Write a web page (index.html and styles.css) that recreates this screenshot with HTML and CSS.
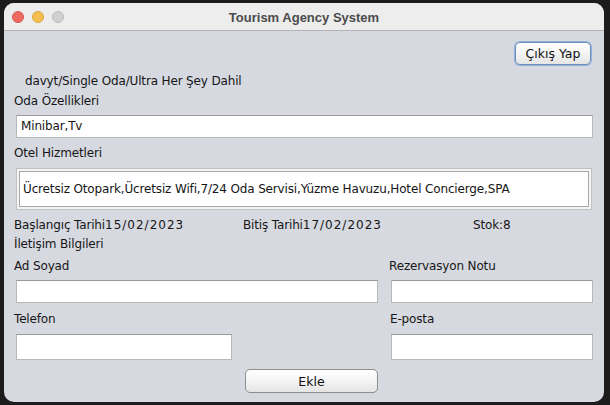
FILE: index.html
```html
<!DOCTYPE html>
<html lang="tr">
<head>
<meta charset="utf-8">
<title>Tourism Agency System</title>
<link rel="stylesheet" href="styles.css">
</head>
<body>
<div class="window">
  <div class="titlebar">
    <div class="lights">
      <span class="light red"></span>
      <span class="light yellow"></span>
      <span class="light grey"></span>
    </div>
    <div class="title">Tourism Agency System</div>
  </div>
  <div class="content">
    <div class="top-row">
      <button class="btn btn-focus">Çıkış Yap</button>
    </div>
    <div class="label info">davyt/Single Oda/Ultra Her Şey Dahil</div>
    <div class="label gap4">Oda Özellikleri</div>
    <div class="field field-wide gap6">Minibar,Tv</div>
    <div class="label gap7">Otel Hizmetleri</div>
    <div class="scroll gap7"><div class="area">Ücretsiz Otopark,Ücretsiz Wifi,7/24 Oda Servisi,Yüzme Havuzu,Hotel Concierge,SPA</div></div>
    <div class="dates gap7">
      <span class="d1">Başlangıç Tarihi<span class="num">15/02/2023</span></span>
      <span class="d2">Bitiş Tarihi<span class="num">17/02/2023</span></span>
      <span class="d3">Stok:8</span>
    </div>
    <div class="label gap3">İletişim Bilgileri</div>
    <div class="pair gap6">
      <div class="label">Ad Soyad</div>
      <div class="label rl">Rezervasyon Notu</div>
    </div>
    <div class="pair gap6">
      <div class="field f-name"></div>
      <div class="field f-note"></div>
    </div>
    <div class="pair gap8">
      <div class="label">Telefon</div>
      <div class="label rl2">E-posta</div>
    </div>
    <div class="pair gap7">
      <div class="field f-phone"></div>
      <div class="field f-mail"></div>
    </div>
    <div class="bottom-row">
      <button class="btn btn-add">Ekle</button>
    </div>
  </div>
</div>
</body>
</html>
```

FILE: styles.css
```css
html, body {
  margin: 0;
  padding: 0;
  background: #1c1c1d;
  width: 610px;
  height: 405px;
  overflow: hidden;
}
body {
  font-family: "DejaVu Sans", sans-serif;
  font-size: 12px;
  letter-spacing: -0.15px;
  color: #161616;
}
.window {
  margin: 3px 0 0 4px;
  width: 600px;
  height: 399px;
  border-radius: 10px;
  overflow: hidden;
  background: #d6d9e0;
  display: flex;
  flex-direction: column;
}
.titlebar {
  height: 27px;
  flex: none;
  background: #ededed;
  border-bottom: 1px solid #b2b2b6;
  position: relative;
  display: flex;
  align-items: center;
  justify-content: center;
}
.lights {
  position: absolute;
  left: 8px;
  top: 8px;
  display: flex;
  gap: 8px;
}
.light {
  width: 12px;
  height: 12px;
  border-radius: 50%;
  box-sizing: border-box;
}
.red { background: #ee6a5f; border: 1px solid #d45a50; }
.yellow { background: #f5bf4f; border: 1px solid #d9a53c; }
.grey { background: #d0d0d0; border: 1px solid #bcbcbc; }
.title {
  font-family: "Liberation Sans", sans-serif;
  font-weight: bold;
  font-size: 13px;
  letter-spacing: 0;
  color: #4b4b4b;
  padding-top: 1px;
}
.content {
  padding: 0 12px 0 10px;
  display: flex;
  flex-direction: column;
}
.top-row {
  display: flex;
  justify-content: flex-end;
  margin-top: 11px;
}
.btn {
  font-family: "DejaVu Sans", sans-serif;
  font-size: 12.5px;
  color: #111;
  box-sizing: border-box;
  border: 1px solid #9d9d9d;
  border-radius: 5px;
  background: linear-gradient(#ffffff, #f4f4f4 50%, #e4e4e4);
  padding: 0;
}
.btn-focus {
  width: 76px;
  height: 23px;
  margin-right: 1px;
  border-color: #6f8fb8;
  box-shadow: 0 0 0 1px #8fb0dc;
}
.label {
  height: 16px;
  line-height: 16px;
  white-space: nowrap;
}
.info {
  margin-top: 8px;
  padding-left: 11px;
}
.gap3 { margin-top: 3px; }
.gap4 { margin-top: 4px; }
.gap6 { margin-top: 6px; }
.gap7 { margin-top: 7px; }
.gap8 { margin-top: 8px; }
.field {
  box-sizing: border-box;
  background: #fff;
  border: 1px solid #b8b8b8;
  border-top-color: #9a9a9a;
  height: 23px;
  line-height: 21px;
  padding-left: 4px;
  margin-left: 2px;
}
.field-wide {
  width: 577px;
  height: 23px;
}
.scroll {
  box-sizing: border-box;
  width: 576px;
  height: 42px;
  margin-left: 2px;
  border: 1px solid #c2c2c2;
  background: #f4f4f4;
  padding: 2px;
}
.area {
  box-sizing: border-box;
  height: 100%;
  background: #fff;
  border: 1px solid #a8a8a8;
  padding-left: 3px;
  line-height: 34px;
  white-space: nowrap;
}
.dates {
  display: flex;
  height: 16px;
  line-height: 16px;
  white-space: nowrap;
}
.num { letter-spacing: 1px; }
.d1 { width: 229px; flex: none; }
.d2 { width: 230px; flex: none; }
.pair {
  display: grid;
  grid-template-columns: 377px 1fr;
}
.rl { margin-left: -2px; }
.rl2 { margin-left: -1px; }
.f-name { width: 362px; }
.f-note, .f-mail { width: 202px; margin-left: 0; }
.f-phone, .f-mail { height: 26px; }
.f-phone { width: 216px; }
.bottom-row {
  display: flex;
  margin-top: 9px;
}
.btn-add {
  width: 133px;
  height: 24px;
  margin-left: 231px;
  border-color: #8e8e8e;
}
```
